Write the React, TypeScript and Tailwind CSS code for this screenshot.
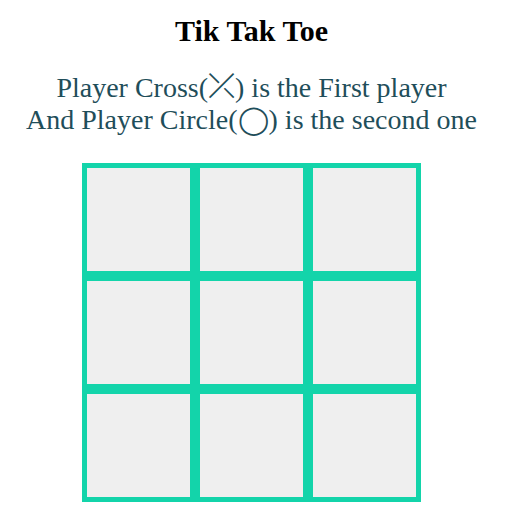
export default function App() {
  const cells = Array.from({ length: 9 });
  return (
    <div className="w-[503px] flex flex-col items-center font-['Liberation_Serif',serif]">
      <h1 className="mt-[14px] text-[30px] font-bold text-black leading-[34px]">Tik Tak Toe</h1>
      <p className="mt-[24px] text-[28px] leading-[31.5px] text-[#1f4e5a] text-center">
        Player Cross(<span className="text-[34px] leading-[0]">⤫</span>) is the First player
        <br />
        And Player Circle(◯) is the second one
      </p>
      <div className="mt-[28px] grid grid-cols-3">
        {cells.map((_, i) => (
          <div key={i} className="w-[113px] h-[113px] border-[5px] border-[#13d4aa] bg-[#efefef]" />
        ))}
      </div>
    </div>
  );
}
